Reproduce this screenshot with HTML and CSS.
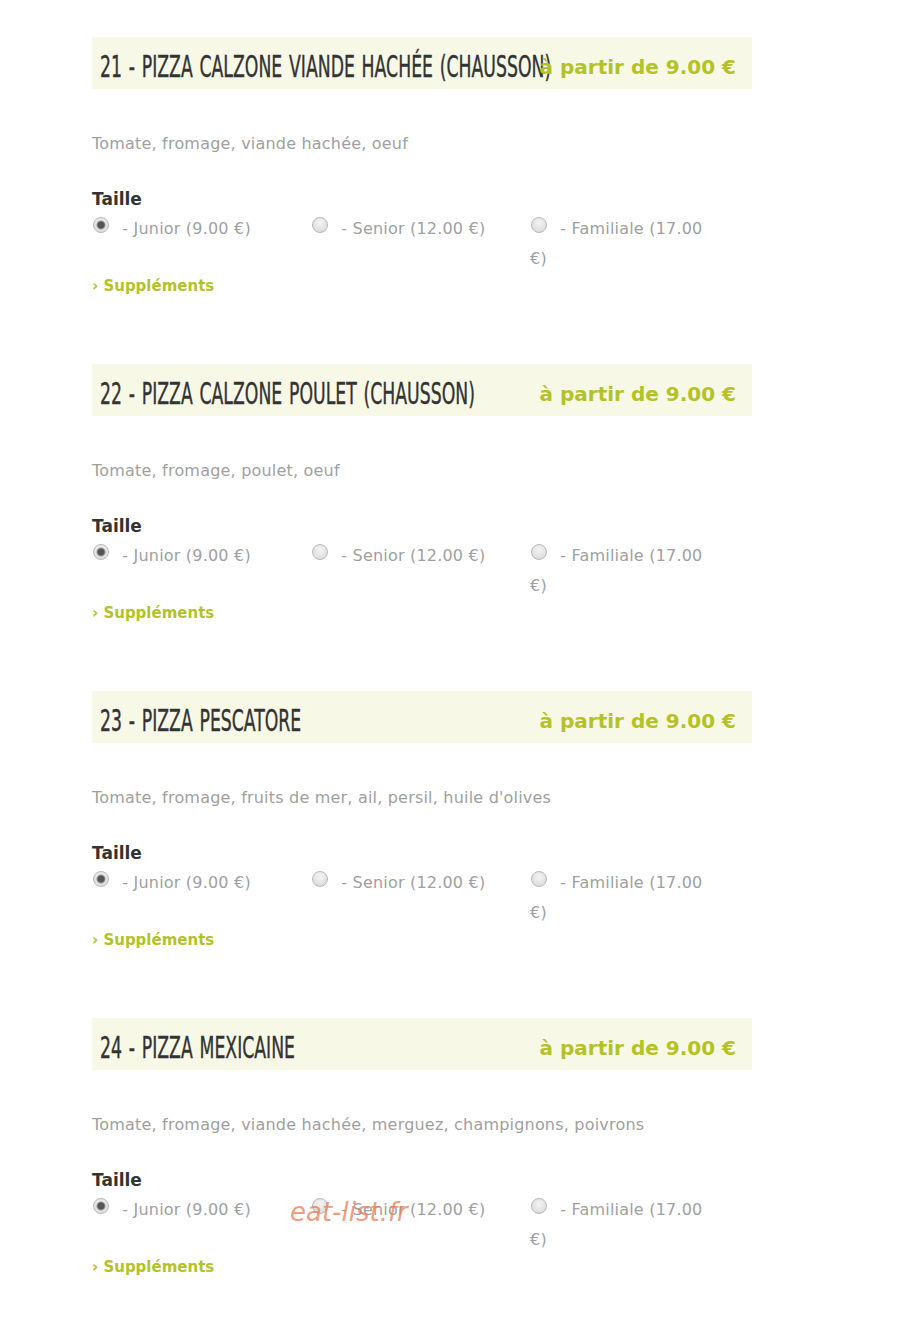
FILE: index.html
```html
<!DOCTYPE html>
<html lang="fr">
<head>
    <meta charset="UTF-8">
    <meta name="viewport" content="width=device-width, initial-scale=1.0">
    <title>Pizzas</title>
    <link rel="stylesheet" href="styles.css">
</head>
<body>
    <div class="menu">
        <div class="item">
            <div class="item-head">
                <h2 class="item-title"><span>21 - PIZZA CALZONE VIANDE HACHÉE (CHAUSSON)</span></h2>
                <span class="item-price">à partir de 9.00 €</span>
            </div>
            <p class="item-desc">Tomate, fromage, viande hachée, oeuf</p>
            <div class="size-label">Taille</div>
            <div class="sizes">
                <label class="size"><input type="radio" name="s21" checked> - Junior (9.00 €)</label>
                <label class="size"><input type="radio" name="s21"> - Senior (12.00 €)</label>
                <label class="size"><input type="radio" name="s21"> - Familiale (17.00 €)</label>
            </div>
            <a class="extras" href="#">› Suppléments</a>
        </div>

        <div class="item">
            <div class="item-head">
                <h2 class="item-title"><span>22 - PIZZA CALZONE POULET (CHAUSSON)</span></h2>
                <span class="item-price">à partir de 9.00 €</span>
            </div>
            <p class="item-desc">Tomate, fromage, poulet, oeuf</p>
            <div class="size-label">Taille</div>
            <div class="sizes">
                <label class="size"><input type="radio" name="s22" checked> - Junior (9.00 €)</label>
                <label class="size"><input type="radio" name="s22"> - Senior (12.00 €)</label>
                <label class="size"><input type="radio" name="s22"> - Familiale (17.00 €)</label>
            </div>
            <a class="extras" href="#">› Suppléments</a>
        </div>

        <div class="item">
            <div class="item-head">
                <h2 class="item-title"><span>23 - PIZZA PESCATORE</span></h2>
                <span class="item-price">à partir de 9.00 €</span>
            </div>
            <p class="item-desc">Tomate, fromage, fruits de mer, ail, persil, huile d'olives</p>
            <div class="size-label">Taille</div>
            <div class="sizes">
                <label class="size"><input type="radio" name="s23" checked> - Junior (9.00 €)</label>
                <label class="size"><input type="radio" name="s23"> - Senior (12.00 €)</label>
                <label class="size"><input type="radio" name="s23"> - Familiale (17.00 €)</label>
            </div>
            <a class="extras" href="#">› Suppléments</a>
        </div>

        <div class="item">
            <div class="item-head">
                <h2 class="item-title"><span>24 - PIZZA MEXICAINE</span></h2>
                <span class="item-price">à partir de 9.00 €</span>
            </div>
            <p class="item-desc">Tomate, fromage, viande hachée, merguez, champignons, poivrons</p>
            <div class="size-label">Taille</div>
            <div class="sizes">
                <label class="size"><input type="radio" name="s24" checked> - Junior (9.00 €)</label>
                <label class="size"><input type="radio" name="s24"> - Senior (12.00 €)</label>
                <label class="size"><input type="radio" name="s24"> - Familiale (17.00 €)</label>
            </div>
            <a class="extras" href="#">› Suppléments</a>
        </div>
    </div>

    <div class="watermark">eat-list.fr</div>
</body>
</html>
```

FILE: styles.css
```css
body {
    margin: 0;
    background-color: #fff;
    font-family: "DejaVu Sans", Verdana, sans-serif;
    position: relative;
    min-height: 1331px;
}

.menu {
    width: 660px;
    margin-left: 92px;
    padding-top: 37px;
}

.item {
    margin-bottom: 65px;
}

.item-head {
    display: flex;
    align-items: center;
    box-sizing: border-box;
    height: 52px;
    padding: 7px 16px 0 8px;
    background-color: #f7f8e6;
}

/* the heading font is a narrow display face, squeeze a regular one */
.item-title {
    flex: 1;
    min-width: 0;
    margin: 0;
    font-family: "DejaVu Sans Condensed", "DejaVu Sans", sans-serif;
    font-stretch: condensed;
    font-weight: normal;
    font-size: 30px;
    word-spacing: 2px;
    color: #333;
    -webkit-text-stroke: 0.4px #333;
    white-space: nowrap;
}

.item-title span {
    display: inline-block;
    transform: scaleX(0.64);
    transform-origin: left center;
}

.item-price {
    flex: none;
    position: relative;
    font-size: 20px;
    font-weight: bold;
    color: #b4c227;
    white-space: nowrap;
}

.item-desc {
    margin: 40px 0 0;
    font-size: 16px;
    letter-spacing: 0.2px;
    line-height: 30px;
    color: #a0a0a0;
}

.size-label {
    margin-top: 25px;
    font-size: 17px;
    font-weight: bold;
    line-height: 30px;
    color: #333;
}

.sizes {
    display: grid;
    grid-template-columns: repeat(3, 219px);
}

.size {
    font-size: 16px;
    letter-spacing: 0.2px;
    line-height: 30px;
    color: #a0a0a0;
    padding-right: 40px;
}

.size input {
    appearance: none;
    width: 16px;
    height: 16px;
    margin: 0 8px 0 1px;
    vertical-align: 1px;
    border: 1px solid #b8b8b8;
    border-radius: 50%;
    background: radial-gradient(circle at 50% 35%, #f4f4f4, #d6d6d6);
}

.size input:checked {
    background: radial-gradient(circle, #555 0 3px, #999 4px, transparent 5px),
                radial-gradient(circle at 50% 35%, #f4f4f4, #d6d6d6);
}

.extras {
    display: block;
    margin-top: -1px;
    font-size: 15px;
    line-height: 26px;
    font-weight: bold;
    color: #b4c227;
    text-decoration: none;
}

.watermark {
    position: absolute;
    left: 290px;
    top: 1197px;
    font-family: "DejaVu Sans", sans-serif;
    font-style: italic;
    font-size: 26px;
    color: rgba(236, 130, 90, 0.8);
}
```
